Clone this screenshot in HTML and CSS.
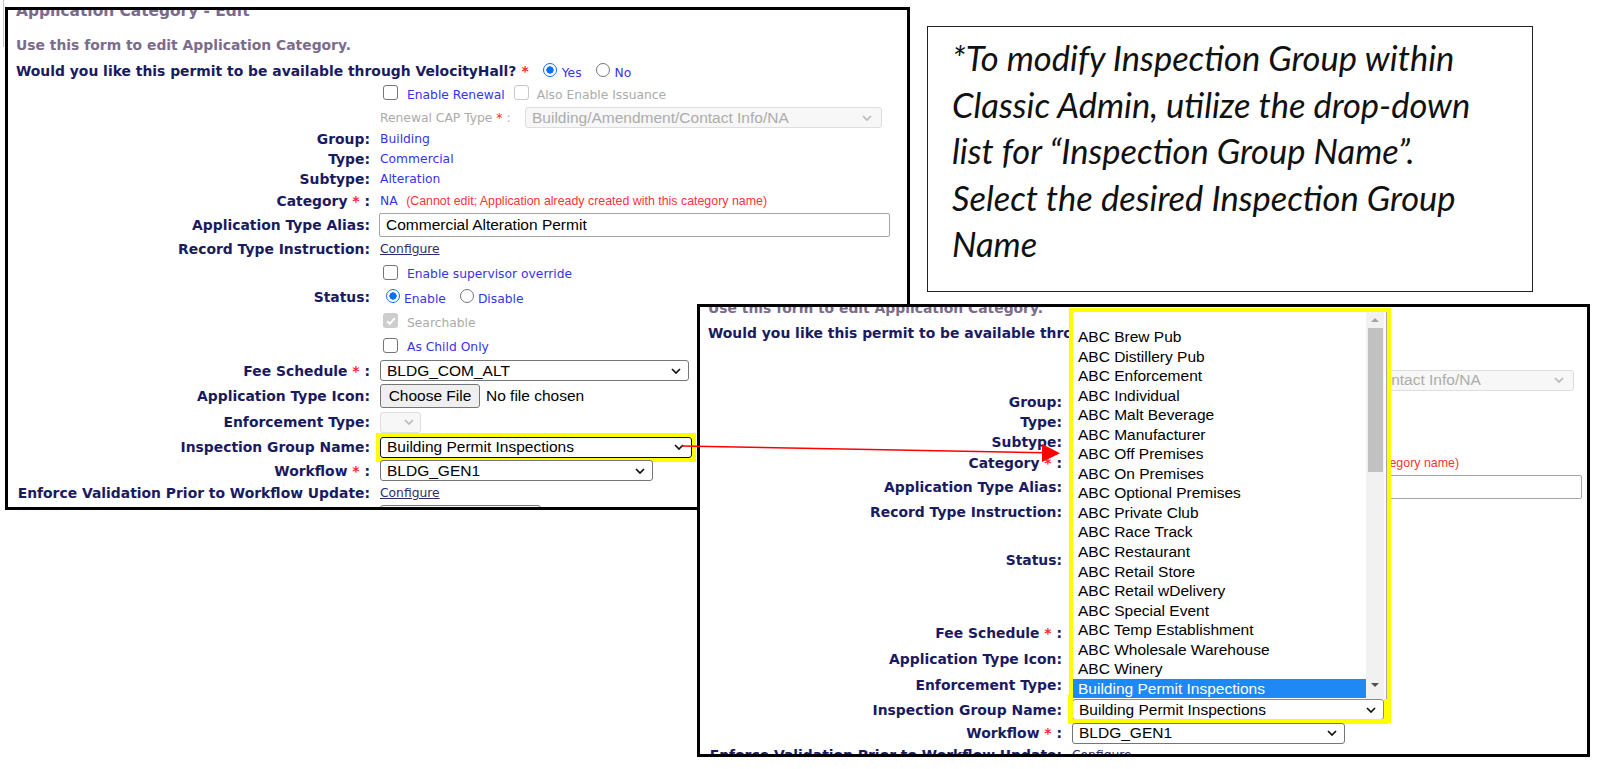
FILE: index.html
```html
<!DOCTYPE html>
<html lang="en">
<head>
<meta charset="utf-8">
<title>Application Category - Edit</title>
<link rel="stylesheet" href="styles.css">
</head>
<body>
<div class="canvas">
  <div class="edge"></div>

  <section class="shot shot-a">
    <div class="form">
      <div class="title">Application Category - Edit</div>
      <div class="intro">Use this form to edit Application Category.</div>
      <div class="q">Would you like this permit to be available through VelocityHall?<span class="req">*</span><span class="rad on"></span><span class="opt">Yes</span><span class="rad"></span><span class="opt">No</span></div>
      <div class="row h25"><span class="lab"></span><span class="val"><span class="cb"></span><span class="ct">Enable Renewal</span><span class="cb dis"></span><span class="ct gray">Also Enable Issuance</span></span></div>
      <div class="row h23"><span class="lab"></span><span class="val"><span class="capl gray">Renewal CAP Type <span class="req">*</span> :</span><span class="ctl sel dis w357"><span>Building/Amendment/Contact Info/NA</span><svg class="chev" viewBox="0 0 10 6"><path d="M1 1l4 4 4-4"/></svg></span></span></div>
      <div class="row h20"><span class="lab">Group:</span><span class="val">Building</span></div>
      <div class="row h20"><span class="lab">Type:</span><span class="val">Commercial</span></div>
      <div class="row h20"><span class="lab">Subtype:</span><span class="val">Alteration</span></div>
      <div class="row h23"><span class="lab">Category <span class="req">*</span> :</span><span class="val">NA<span class="warn">(Cannot edit; Application already created with this category name)</span></span></div>
      <div class="row h25"><span class="lab">Application Type Alias:</span><span class="val"><span class="ctl inp">Commercial Alteration Permit</span></span></div>
      <div class="row h24"><span class="lab">Record Type Instruction:</span><span class="val"><span class="link">Configure</span></span></div>
      <div class="row h24"><span class="lab"></span><span class="val"><span class="cb"></span><span class="ct">Enable supervisor override</span></span></div>
      <div class="row h24"><span class="lab">Status:</span><span class="val status"><span class="rad on"></span><span class="opt">Enable</span><span class="rad"></span><span class="opt">Disable</span></span></div>
      <div class="row h25"><span class="lab"></span><span class="val"><span class="cb on-dis"><svg class="tick" viewBox="0 0 12 12"><path d="M2.2 6.2l2.6 2.6 5-5.6"/></svg></span><span class="ct gray">Searchable</span></span></div>
      <div class="row h24"><span class="lab"></span><span class="val"><span class="cb"></span><span class="ct">As Child Only</span></span></div>
      <div class="row h25"><span class="lab">Fee Schedule <span class="req">*</span> :</span><span class="val"><span class="ctl sel w309"><span>BLDG_COM_ALT</span><svg class="chev" viewBox="0 0 10 6"><path d="M1 1l4 4 4-4"/></svg></span></span></div>
      <div class="row h26"><span class="lab">Application Type Icon:</span><span class="val"><span class="ctl btn">Choose File</span><span class="ctl nofile">No file chosen</span></span></div>
      <div class="row h26"><span class="lab">Enforcement Type:</span><span class="val"><span class="ctl sel dis w41"><svg class="chev" viewBox="0 0 10 6"><path d="M1 1l4 4 4-4"/></svg></span></span></div>
      <div class="row h24"><span class="lab">Inspection Group Name:</span><span class="val"><span class="hl"><span class="ctl sel focus w312"><span>Building Permit Inspections</span><svg class="chev" viewBox="0 0 10 6"><path d="M1 1l4 4 4-4"/></svg></span></span></span></div>
      <div class="row h23"><span class="lab">Workflow <span class="req">*</span> :</span><span class="val"><span class="ctl sel w273"><span>BLDG_GEN1</span><svg class="chev" viewBox="0 0 10 6"><path d="M1 1l4 4 4-4"/></svg></span></span></div>
      <div class="row h21"><span class="lab">Enforce Validation Prior to Workflow Update:</span><span class="val"><span class="link">Configure</span></span></div>
      <div class="row h24"><span class="lab"></span><span class="val"><span class="ctl sel w161"><span></span><svg class="chev" viewBox="0 0 10 6"><path d="M1 1l4 4 4-4"/></svg></span></span></div>
    </div>
  </section>

  <aside class="note">
    <span class="note-line">*To modify Inspection Group within</span>
    <span class="note-line">Classic Admin, utilize the drop-down</span>
    <span class="note-line">list for “Inspection Group Name”.</span>
    <span class="note-line">Select the desired Inspection Group</span>
    <span class="note-line">Name</span>
  </aside>

  <section class="shot shot-b">
    <div class="form">
      <div class="title">Application Category - Edit</div>
      <div class="intro">Use this form to edit Application Category.</div>
      <div class="q">Would you like this permit to be available through VelocityHall?<span class="req">*</span><span class="rad on"></span><span class="opt">Yes</span><span class="rad"></span><span class="opt">No</span></div>
      <div class="row h25"><span class="lab"></span><span class="val"><span class="cb"></span><span class="ct">Enable Renewal</span><span class="cb dis"></span><span class="ct gray">Also Enable Issuance</span></span></div>
      <div class="row h23"><span class="lab"></span><span class="val"><span class="capl gray">Renewal CAP Type <span class="req">*</span> :</span><span class="ctl sel dis w357"><span>Building/Amendment/Contact Info/NA</span><svg class="chev" viewBox="0 0 10 6"><path d="M1 1l4 4 4-4"/></svg></span></span></div>
      <div class="row h20"><span class="lab">Group:</span><span class="val">Building</span></div>
      <div class="row h20"><span class="lab">Type:</span><span class="val">Commercial</span></div>
      <div class="row h20"><span class="lab">Subtype:</span><span class="val">Alteration</span></div>
      <div class="row h23"><span class="lab">Category <span class="req">*</span> :</span><span class="val">NA<span class="warn">(Cannot edit; Application already created with this category name)</span></span></div>
      <div class="row h25"><span class="lab">Application Type Alias:</span><span class="val"><span class="ctl inp">Commercial Alteration Permit</span></span></div>
      <div class="row h24"><span class="lab">Record Type Instruction:</span><span class="val"><span class="link">Configure</span></span></div>
      <div class="row h24"><span class="lab"></span><span class="val"><span class="cb"></span><span class="ct">Enable supervisor override</span></span></div>
      <div class="row h24"><span class="lab">Status:</span><span class="val status"><span class="rad on"></span><span class="opt">Enable</span><span class="rad"></span><span class="opt">Disable</span></span></div>
      <div class="row h25"><span class="lab"></span><span class="val"><span class="cb on-dis"><svg class="tick" viewBox="0 0 12 12"><path d="M2.2 6.2l2.6 2.6 5-5.6"/></svg></span><span class="ct gray">Searchable</span></span></div>
      <div class="row h24"><span class="lab"></span><span class="val"><span class="cb"></span><span class="ct">As Child Only</span></span></div>
      <div class="row h25"><span class="lab">Fee Schedule <span class="req">*</span> :</span><span class="val"><span class="ctl sel w309"><span>BLDG_COM_ALT</span><svg class="chev" viewBox="0 0 10 6"><path d="M1 1l4 4 4-4"/></svg></span></span></div>
      <div class="row h26"><span class="lab">Application Type Icon:</span><span class="val"><span class="ctl btn">Choose File</span><span class="ctl nofile">No file chosen</span></span></div>
      <div class="row h26"><span class="lab">Enforcement Type:</span><span class="val"><span class="ctl sel dis w41"><svg class="chev" viewBox="0 0 10 6"><path d="M1 1l4 4 4-4"/></svg></span></span></div>
      <div class="row h24"><span class="lab">Inspection Group Name:</span><span class="val"><span class="hl"><span class="ctl sel focus w312"><span>Building Permit Inspections</span><svg class="chev" viewBox="0 0 10 6"><path d="M1 1l4 4 4-4"/></svg></span></span></span></div>
      <div class="row h23"><span class="lab">Workflow <span class="req">*</span> :</span><span class="val"><span class="ctl sel w273"><span>BLDG_GEN1</span><svg class="chev" viewBox="0 0 10 6"><path d="M1 1l4 4 4-4"/></svg></span></span></div>
      <div class="row h21"><span class="lab">Enforce Validation Prior to Workflow Update:</span><span class="val"><span class="link">Configure</span></span></div>
      <div class="row h24"><span class="lab"></span><span class="val"><span class="ctl sel w161"><span></span><svg class="chev" viewBox="0 0 10 6"><path d="M1 1l4 4 4-4"/></svg></span></span></div>
    </div>
  </section>

  <div class="lbframe">
    <div class="listbox">
      <div class="opts ctl">
        <div class="item"></div>
        <div class="item">ABC Brew Pub</div>
        <div class="item">ABC Distillery Pub</div>
        <div class="item">ABC Enforcement</div>
        <div class="item">ABC Individual</div>
        <div class="item">ABC Malt Beverage</div>
        <div class="item">ABC Manufacturer</div>
        <div class="item">ABC Off Premises</div>
        <div class="item">ABC On Premises</div>
        <div class="item">ABC Optional Premises</div>
        <div class="item">ABC Private Club</div>
        <div class="item">ABC Race Track</div>
        <div class="item">ABC Restaurant</div>
        <div class="item">ABC Retail Store</div>
        <div class="item">ABC Retail wDelivery</div>
        <div class="item">ABC Special Event</div>
        <div class="item">ABC Temp Establishment</div>
        <div class="item">ABC Wholesale Warehouse</div>
        <div class="item">ABC Winery</div>
        <div class="item sel-item">Building Permit Inspections</div>
      </div>
      <div class="sb">
        <div class="sb-btn"><svg class="tri up" viewBox="0 0 8 4"><path d="M0 4L4 0L8 4Z"/></svg></div>
        <div class="sb-thumb"></div>
        <div class="sb-fill"></div>
        <div class="sb-btn down-btn"><svg class="tri down" viewBox="0 0 8 4"><path d="M0 0L8 0L4 4Z"/></svg></div>
      </div>
    </div>
  </div>

  <svg class="arrow" viewBox="0 0 1600 769" width="1600" height="769">
    <line x1="682" y1="446" x2="1045" y2="452.8" stroke="#ff0000" stroke-width="1.6"/>
    <polygon points="1060,453.3 1042,444 1042,462" fill="#ff0000"/>
  </svg>
</div>
</body>
</html>
```

FILE: styles.css
```css
* { box-sizing: border-box; }
html, body { margin: 0; padding: 0; background: #fff; }

.canvas {
  position: relative;
  width: 1600px;
  height: 769px;
  overflow: hidden;
  background: #fff;
  font-family: "DejaVu Sans", Verdana, sans-serif;
}

.edge {
  position: absolute;
  left: 3px;
  top: 0;
  width: 1px;
  height: 47px;
  background: #c6c6c6;
}

/* screenshot windows */
.shot {
  position: absolute;
  border: 3px solid #000;
  background: #fff;
  overflow: hidden;
}
.shot-a { left: 5px; top: 7px; width: 905px; height: 503px; }
.shot-b { left: 697px; top: 304px; width: 893px; height: 453px; }

/* form */
.form { padding-left: 8px; }
.shot-a .form { margin-top: -9px; }
.shot-b .form { margin-top: -43.5px; }

.title {
  height: 20px;
  line-height: 20px;
  margin-bottom: 14px;
  font-size: 15.4px;
  font-weight: 700;
  color: #7b6b8d;
  white-space: nowrap;
}
.intro {
  height: 20px;
  line-height: 20px;
  font-size: 13.9px;
  font-weight: 700;
  color: #7b6b8d;
  white-space: nowrap;
}
.q {
  height: 21px;
  margin-top: 5px;
  display: flex;
  align-items: center;
  font-size: 13.9px;
  font-weight: 700;
  color: #1a1a60;
  white-space: nowrap;
}
.q .req { margin-left: 5px; }
.q .rad { margin-left: 14px; }

.row {
  display: grid;
  grid-template-columns: 354px max-content;
  column-gap: 10px;
  align-items: center;
}
.h20 { height: 20px; }
.h21 { height: 21px; }
.h23 { height: 23px; }
.h24 { height: 24px; }
.h25 { height: 25px; }
.h26 { height: 26px; }

.lab {
  text-align: right;
  font-size: 13.9px;
  font-weight: 700;
  color: #1a1a60;
  white-space: nowrap;
}
.req { color: #ff2a2a; }

.val {
  display: flex;
  align-items: center;
  white-space: nowrap;
  font-size: 12.3px;
  color: #3434ea;
}
.gray { color: #ababab; }
.capl { width: 145px; }
.link { color: #2c2c6c; text-decoration: underline; }
.warn {
  margin-left: 8.5px;
  font-family: "Liberation Sans", Arial, sans-serif;
  font-size: 12.4px;
  color: #ff3434;
}
.ct { padding-top: 2px; }

.opt {
  margin-left: 5px;
  padding-top: 4px;
  font-weight: 400;
  font-size: 12.3px;
  color: #3434ea;
}
.status .rad:first-child { margin-left: 6px; }
.status .opt { margin-left: 4px; }
.status .rad + .opt + .rad { margin-left: 14px; }

/* checkbox / radio */
.cb {
  flex: none;
  width: 15px;
  height: 15px;
  margin: 0 9px 2px 3px;
  border: 1px solid #767676;
  border-radius: 3px;
  background: #fff;
}
.cb.dis { margin-left: 9px; margin-right: 8px; border-color: #c8c8c8; }
.cb.on-dis {
  border: none;
  background: #cdcdcd;
  display: flex;
  align-items: center;
  justify-content: center;
}
.tick { width: 12px; height: 12px; fill: none; stroke: #fff; stroke-width: 2; }

.rad {
  flex: none;
  width: 14px;
  height: 14px;
  margin-bottom: 2px;
  border: 1px solid #767676;
  border-radius: 50%;
  background: #fff;
}
.rad.on {
  border: 1.5px solid #0b6ff0;
  background: radial-gradient(circle, #0b6ff0 0 3.4px, #fff 3.9px);
}

/* controls */
.ctl {
  font-family: "Liberation Sans", Arial, sans-serif;
  font-size: 15.5px;
  color: #000;
}
.sel {
  flex: none;
  height: 21px;
  padding: 0 7px 0 6px;
  border: 1px solid #767676;
  border-radius: 3px;
  background: #fff;
  display: flex;
  align-items: center;
  justify-content: space-between;
}
.chev { width: 10px; height: 6px; fill: none; stroke: #111; stroke-width: 1.7; }
.sel.dis { background: #f7f7f7; border-color: #dedede; color: #acacac; }
.sel.dis .chev { stroke: #b8b8b8; }
.sel.focus { border: 1.5px solid #111; }
.shot-b .sel.focus { border: 1px solid #8a8a8a; }

.w41 { width: 41px; justify-content: flex-end; padding-right: 6px; }
.w161 { width: 161px; }
.w273 { width: 273px; }
.w309 { width: 309px; }
.w312 { width: 312px; }
.w357 { width: 357px; padding-right: 9px; }

.hl {
  display: flex;
  margin: -4px;
  border: 4px solid #ffff00;
}

.inp {
  width: 511px;
  height: 24px;
  margin-left: -1px;
  padding-left: 6px;
  border: 1px solid #a6a6a6;
  border-radius: 2px;
  display: flex;
  align-items: center;
}
.btn {
  width: 100px;
  height: 24px;
  border: 1px solid #767676;
  border-radius: 3px;
  background: #efefef;
  display: flex;
  align-items: center;
  justify-content: center;
}
.nofile { margin-left: 6px; }

/* callout text box */
.note {
  position: absolute;
  left: 927px;
  top: 26px;
  width: 606px;
  height: 266px;
  padding: 8px 0 0 24px;
  border: 1px solid #222;
  background: #fff;
  font-family: Lato, "Open Sans", sans-serif;
  font-style: italic;
  font-size: 34.5px;
  line-height: 46.5px;
  color: #111;
}
.note-line { display: block; white-space: nowrap; }

/* open drop-down list overlay */
.lbframe {
  position: absolute;
  left: 1069px;
  top: 308px;
  width: 322px;
  height: 415px;
  border: 4px solid #ffff00;
}
.listbox {
  height: 387px;
  display: flex;
  background: #fff;
  padding-right: 2px;
  border-right: 1px solid #a8a8a8;
  overflow: hidden;
}
.opts { flex: 1; margin-top: -4.6px; }
.item {
  height: 19.56px;
  line-height: 19.56px;
  padding-left: 5px;
  white-space: nowrap;
}
.sel-item { background: #1e88f5; color: #fff; }

.sb {
  flex: none;
  width: 18px;
  display: flex;
  flex-direction: column;
  align-items: center;
  background: #f1f1f1;
}
.sb-btn {
  height: 16px;
  width: 100%;
  display: flex;
  align-items: center;
  justify-content: center;
}
.down-btn { height: 22px; padding-bottom: 6px; }
.tri { width: 8px; height: 4px; }
.tri.up { fill: #a3a3a3; }
.tri.down { fill: #505050; }
.sb-thumb { width: 15px; height: 144px; background: #c1c1c1; }
.sb-fill { flex: 1; }

.arrow {
  position: absolute;
  left: 0;
  top: 0;
  pointer-events: none;
}
```
